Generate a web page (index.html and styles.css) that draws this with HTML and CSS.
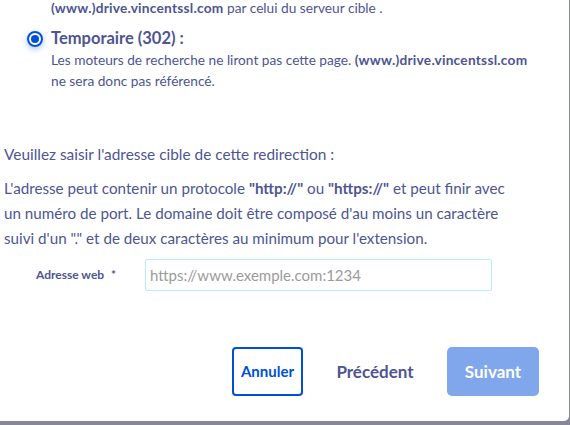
FILE: index.html
```html
<!DOCTYPE html>
<html lang="fr">
<head>
<meta charset="utf-8">
<link rel="stylesheet" href="styles.css">
</head>
<body>
<div class="modal">
  <div class="options">
    <p class="desc desc-first"><b>(www.)drive.vincentssl.com</b> par celui du serveur cible .</p>
    <div class="option">
      <span class="radio"><span class="radio-dot"></span></span>
      <div class="option-body">
        <div class="option-label">Temporaire (302) :</div>
        <p class="desc">Les moteurs de recherche ne liront pas cette page. <b>(www.)drive.vincentssl.com</b><br>ne sera donc pas référencé.</p>
      </div>
    </div>
  </div>
  <p class="intro">Veuillez saisir l'adresse cible de cette redirection :</p>
  <p class="help">L'adresse peut contenir un protocole <b>"http://"</b> ou <b>"https://"</b> et peut finir avec<br>un numéro de port. Le domaine doit être composé d'au moins un caractère<br>suivi d'un "." et de deux caractères au minimum pour l'extension.</p>
  <div class="field">
    <label class="field-label">Adresse web <span class="req">*</span></label>
    <input class="field-input" type="text" placeholder="https://www.exemple.com:1234">
  </div>
  <div class="actions">
    <button class="btn btn-outline">Annuler</button>
    <button class="btn btn-ghost">Précédent</button>
    <button class="btn btn-primary">Suivant</button>
  </div>
</div>
</body>
</html>
```
FILE: styles.css
```css
html, body {
  margin: 0;
  padding: 0;
}
body {
  background: #878799;
  font-family: "Source Sans Pro", Lato, "Noto Sans", sans-serif;
  color: #4d5592;
  width: 570px;
  height: 425px;
  overflow: hidden;
}
.modal {
  background: #fff;
  width: 569px;
  height: 421px;
  border-bottom-right-radius: 5px;
  display: flex;
  flex-direction: column;
  box-sizing: border-box;
  padding-left: 4px;
}
.options {
  padding-left: 23px;
  display: flex;
  flex-direction: column;
}
.desc {
  margin: 0;
  font-size: 13.7px;
  line-height: 21px;
}
.desc b {
  font-weight: 700;
  letter-spacing: 0.25px;
}
.desc-first {
  line-height: 15px;
  padding-left: 24px;
}
.option {
  display: flex;
  gap: 8px;
  margin-top: 12.5px;
}
.radio {
  width: 16px;
  height: 16px;
  box-sizing: border-box;
  border: 2px solid #0050d7;
  border-radius: 50%;
  display: flex;
  align-items: center;
  justify-content: center;
  margin-top: 3px;
  box-shadow: 0 2px 6px rgba(0, 80, 215, 0.35);
}
.radio-dot {
  width: 8px;
  height: 8px;
  border-radius: 50%;
  background: #0050d7;
}
.option-label {
  font-size: 16.5px;
  font-weight: 700;
  line-height: 21px;
}
.intro {
  margin: 51px 0 0;
  font-size: 15.4px;
  line-height: 24px;
}
.help {
  margin: 10px 0 0;
  font-size: 15.2px;
  line-height: 25px;
}
.field {
  display: flex;
  align-items: center;
  margin-top: 8px;
}
.field-label {
  width: 141px;
  flex-shrink: 0;
  padding-left: 32px;
  box-sizing: border-box;
  font-size: 12px;
  font-weight: 700;
}
.req {
  margin-left: 4px;
}
.field-input {
  width: 347px;
  height: 32px;
  box-sizing: border-box;
  border: 1px solid #b8eef6;
  border-radius: 2px;
  padding: 0 4px;
  font-family: "Source Sans Pro", Lato, "Noto Sans", sans-serif;
  font-size: 15px;
  outline: none;
}
.field-input::placeholder {
  color: #9b9b9b;
}
.actions {
  display: flex;
  justify-content: flex-end;
  gap: 17px;
  margin-top: 56px;
  padding-right: 30px;
}
.btn {
  height: 49px;
  box-sizing: border-box;
  font-family: "Source Sans Pro", Lato, "Noto Sans", sans-serif;
  font-weight: 700;
  background: none;
  border: none;
  padding: 0;
  cursor: pointer;
}
.btn-outline {
  width: 71px;
  border: 2px solid #0050d7;
  border-radius: 4px;
  color: #0050d7;
  font-size: 15px;
}
.btn-ghost {
  width: 110px;
  color: #4d5592;
  font-size: 17px;
}
.btn-primary {
  width: 92px;
  border-radius: 5px;
  background: #80a7eb;
  color: #fff;
  font-size: 17px;
}
```
